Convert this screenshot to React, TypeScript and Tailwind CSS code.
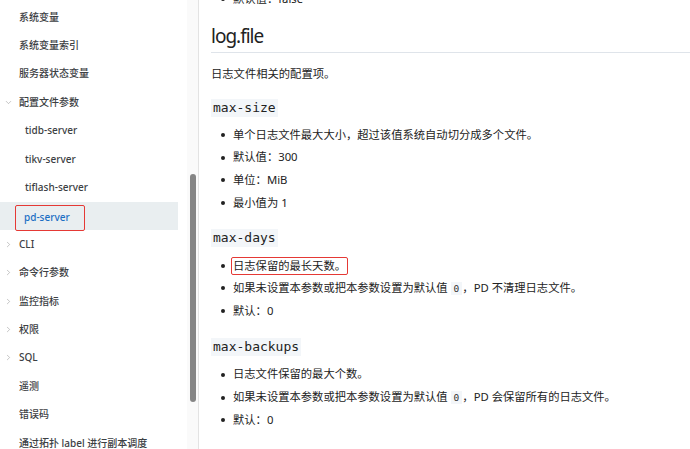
import React from "react";
import { ChevronDown, ChevronRight } from "lucide-react";

interface NavItem {
    label: string;
    level?: number;
    chevron?: "down" | "right";
    active?: boolean;
}

const navItems: NavItem[] = [
    { label: "系统变量" },
    { label: "系统变量索引" },
    { label: "服务器状态变量" },
    { label: "配置文件参数", chevron: "down" },
    { label: "tidb-server", level: 1 },
    { label: "tikv-server", level: 1 },
    { label: "tiflash-server", level: 1 },
    { label: "pd-server", level: 1, active: true },
    { label: "CLI", chevron: "right" },
    { label: "命令行参数", chevron: "right" },
    { label: "监控指标", chevron: "right" },
    { label: "权限", chevron: "right" },
    { label: "SQL", chevron: "right" },
    { label: "遥测" },
    { label: "错误码" },
    { label: "通过拓扑 label 进行副本调度" },
];

const sans = "font-['Noto_Sans','Noto_Sans_CJK_SC',sans-serif]";
const mono = "font-['DejaVu_Sans_Mono','Noto_Sans_CJK_SC',monospace]";

const Code = ({ children }: { children: React.ReactNode }) => (
    <span className={`${mono} bg-[#f3f6f9] px-[3px] py-[1px] text-[9.5px] text-[#333]`}>
        {children}
    </span>
);

const Li = ({ children, boxed }: { children: React.ReactNode; boxed?: boolean }) => (
    <li className="flex h-[22.7px] items-center">
        <span className="mr-[8px] ml-[10px] h-[4px] w-[4px] rounded-full bg-[#222]" />
        {boxed ? (
            <span className="ml-[-2px] rounded-[2px] border-[1.5px] border-[#e53935] px-[1px] leading-[16px]">
                {children}
            </span>
        ) : (
            <span>{children}</span>
        )}
    </li>
);

const ParamTitle = ({ children, mt }: { children: React.ReactNode; mt: string }) => (
    <div className={`${mt} flex`}>
        <span className={`${mono} bg-[#f3f6f9] px-[2px] text-[13px] leading-[18px] text-[#222]`}>
            {children}
        </span>
    </div>
);

const App: React.FC = () => {
    return (
        <div className={`${sans} flex h-[449px] w-[690px] overflow-hidden bg-white`}>
            {/* sidebar */}
            <div className="flex w-[199px] shrink-0 border-r border-[#e3e3e3]">
                <ul className="w-[187px] pt-[3px]">
                    {navItems.map((item) => (
                        <li
                            key={item.label}
                            className={`flex h-[28.4px] items-center ${item.active ? "w-[178px] bg-[#e9eef0]" : ""}`}
                        >
                            <span className="flex w-[19px] justify-center">
                                {item.chevron === "down" && (
                                    <ChevronDown size={9} strokeWidth={1.5} className="ml-[-2px] text-[#999]" />
                                )}
                                {item.chevron === "right" && (
                                    <ChevronRight size={9} strokeWidth={1.5} className="ml-[-2px] text-[#999]" />
                                )}
                            </span>
                            {item.active ? (
                                <span className="mt-[4px] ml-[-4px] flex h-[26px] w-[70px] items-center rounded-[2px] border-[1.5px] border-[#e53935] pl-[8px] text-[10px] font-medium text-[#1c6fc4]">
                                    {item.label}
                                </span>
                            ) : (
                                <span
                                    className={`whitespace-nowrap text-[10px] font-medium text-[#3c4043] ${item.level ? "ml-[6px]" : ""}`}
                                >
                                    {item.label}
                                </span>
                            )}
                        </li>
                    ))}
                </ul>
                <div className="w-[11px] bg-[#fafafa] pt-[174px]">
                    <div className="mx-auto h-[228px] w-[6px] rounded-full bg-[#858585]" />
                </div>
            </div>

            {/* content */}
            <div className="flex-1 pl-[12px] text-[11.3px] text-[#222]">
                <ul className="mt-[-12px]">
                    <Li>默认值：false</Li>
                </ul>
                <h2 className="mt-[11px] h-[31px] border-b border-[#dfe4ea] text-[19px] leading-[28px] tracking-[-1px] text-[#222]">
                    log.file
                </h2>
                <p className="mt-[11px] leading-[20px]">日志文件相关的配置项。</p>

                <ParamTitle mt="mt-[15px]">max-size</ParamTitle>
                <ul className="mt-[7px]">
                    <Li>单个日志文件最大大小，超过该值系统自动切分成多个文件。</Li>
                    <Li>默认值：300</Li>
                    <Li>单位：MiB</Li>
                    <Li>最小值为 1</Li>
                </ul>

                <ParamTitle mt="mt-[15px]">max-days</ParamTitle>
                <ul className="mt-[7px]">
                    <Li boxed>日志保留的最长天数。</Li>
                    <Li>
                        如果未设置本参数或把本参数设置为默认值 <Code>0</Code>，PD 不清理日志文件。
                    </Li>
                    <Li>默认：0</Li>
                </ul>

                <ParamTitle mt="mt-[15px]">max-backups</ParamTitle>
                <ul className="mt-[8px]">
                    <Li>日志文件保留的最大个数。</Li>
                    <Li>
                        如果未设置本参数或把本参数设置为默认值 <Code>0</Code>，PD 会保留所有的日志文件。
                    </Li>
                    <Li>默认：0</Li>
                </ul>
            </div>
        </div>
    );
};

export default App;
